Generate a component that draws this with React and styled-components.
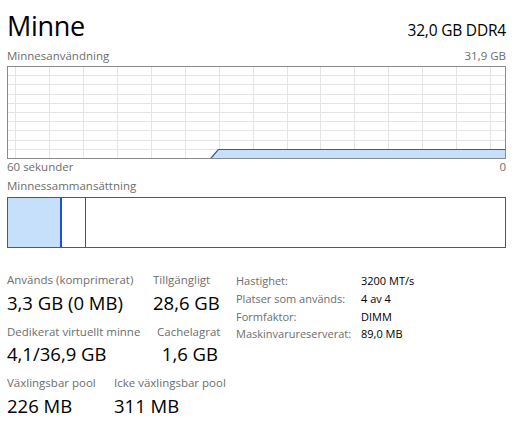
import React from "react";
import styled, { createGlobalStyle } from "styled-components";

const Global = createGlobalStyle`
  html, body { margin: 0; padding: 0; background: #fff; }
  body { font-family: "Open Sans", "Noto Sans", sans-serif; color: #000; }
`;

const Page = styled.div`
  width: 499px;
  padding: 0 8px 0 7px;
`;

const Header = styled.div`
  margin-top: 8px;
  display: flex;
  justify-content: space-between;
  align-items: baseline;
  line-height: 36px;
`;

const Title = styled.div`
  font-size: 27px;
  letter-spacing: -0.3px;
`;

const Spec = styled.div`
  font-size: 15.5px;
  letter-spacing: -0.2px;
`;

const CaptionRow = styled.div`
  margin-top: ${(p) => p.$top || 0}px;
  display: flex;
  justify-content: space-between;
  font-size: 11.5px;
  line-height: 16px;
  color: #6d6d6d;
`;

const GraphBox = styled.div`
  margin-top: 2px;
  height: 93px;
  line-height: 0;
`;

const CompBar = styled.div`
  margin-top: 3px;
  height: 51px;
  box-sizing: border-box;
  border: 1px solid #2760b0;
  display: flex;
`;

const Segment = styled.div`
  width: ${(p) => p.$w}px;
  flex: ${(p) => (p.$grow ? 1 : "none")};
  background: ${(p) => p.$bg || "#fff"};
  border-right: ${(p) => p.$line || 0}px solid #1a56c4;
`;

const Stats = styled.div`
  margin-top: 24px;
  display: flex;
`;

const StatCol = styled.div`
  width: 229px;
  display: flex;
  flex-direction: column;
  gap: 9px;
`;

const StatRow = styled.div`
  display: flex;
`;

const Stat = styled.div`
  width: ${(p) => p.$w}px;
  flex: none;
  display: flex;
  flex-direction: column;
  gap: 2.5px;
`;

const Label = styled.div`
  font-size: 11.5px;
  line-height: 16px;
  color: #6d6d6d;
  white-space: nowrap;
`;

const Value = styled.div`
  font-size: 18.5px;
  line-height: 24px;
  color: #000;
  white-space: nowrap;
`;

const Info = styled.div`
  margin-top: 1px;
  display: grid;
  grid-template-columns: 125px auto;
  grid-auto-rows: 17.8px;
  align-content: start;
  font-size: 11px;
  line-height: 16px;
`;

const InfoKey = styled.div`
  color: #6d6d6d;
  white-space: nowrap;
`;

const InfoVal = styled.div`
  color: #000;
  white-space: nowrap;
`;

function Graph() {
  const w = 499;
  const h = 93;
  const hLines = [];
  for (let i = 1; i < 10; i++) hLines.push(0.5 + Math.round((i * 92) / 10));
  const vLines = [];
  for (let x = 8.3; x < w - 2; x += 33.9) vLines.push(Math.round(x) + 0.5);
  return (
    <svg width={w} height={h} viewBox={`0 0 ${w} ${h}`}>
      <rect x="0" y="0" width={w} height={h} fill="#fff" />
      {hLines.map((y) => (
        <line key={"h" + y} x1="0" x2={w} y1={y} y2={y} stroke="#e4e4e4" strokeWidth="1" />
      ))}
      {vLines.map((x) => (
        <line key={"v" + x} x1={x} x2={x} y1="0" y2={h} stroke="#e4e4e4" strokeWidth="1" />
      ))}
      <polygon points="203.7,92 211.3,83.5 498,83.5 498,92" fill="#c6dffb" />
      <polyline points="203.7,92.5 211.3,83.5 498,83.5" fill="none" stroke="#2860ad" strokeWidth="1.2" />
      <rect x="0.5" y="0.5" width={w - 1} height={h - 1} fill="none" stroke="#8a8a8a" strokeWidth="1" />
    </svg>
  );
}

export default function App() {
  return (
    <Page>
      <Global />
      <Header>
        <Title>Minne</Title>
        <Spec>32,0 GB DDR4</Spec>
      </Header>
      <CaptionRow>
        <span>Minnesanvändning</span>
        <span>31,9 GB</span>
      </CaptionRow>
      <GraphBox>
        <Graph />
      </GraphBox>
      <CaptionRow>
        <span>60 sekunder</span>
        <span>0</span>
      </CaptionRow>
      <CaptionRow $top={3}>
        <span>Minnessammansättning</span>
      </CaptionRow>
      <CompBar>
        <Segment $w={52} $bg="#c6dffb" $line={2} />
        <Segment $w={23} $line={1} />
        <Segment $grow />
      </CompBar>
      <Stats>
        <StatCol>
          <StatRow>
            <Stat $w={146}>
              <Label>Används (komprimerat)</Label>
              <Value>3,3 GB (0 MB)</Value>
            </Stat>
            <Stat $w={80}>
              <Label>Tillgängligt</Label>
              <Value>28,6 GB</Value>
            </Stat>
          </StatRow>
          <StatRow>
            <Stat $w={150}>
              <Label>Dedikerat virtuellt minne</Label>
              <Value>4,1/36,9 GB</Value>
            </Stat>
            <Stat $w={76}>
              <Label>Cachelagrat</Label>
              <Value>&nbsp;1,6 GB</Value>
            </Stat>
          </StatRow>
          <StatRow>
            <Stat $w={107}>
              <Label>Växlingsbar pool</Label>
              <Value>226 MB</Value>
            </Stat>
            <Stat $w={120}>
              <Label>Icke växlingsbar pool</Label>
              <Value>311 MB</Value>
            </Stat>
          </StatRow>
        </StatCol>
        <Info>
          <InfoKey>Hastighet:</InfoKey>
          <InfoVal>3200 MT/s</InfoVal>
          <InfoKey>Platser som används:</InfoKey>
          <InfoVal>4 av 4</InfoVal>
          <InfoKey>Formfaktor:</InfoKey>
          <InfoVal>DIMM</InfoVal>
          <InfoKey>Maskinvarureserverat:</InfoKey>
          <InfoVal>89,0 MB</InfoVal>
        </Info>
      </Stats>
    </Page>
  );
}
